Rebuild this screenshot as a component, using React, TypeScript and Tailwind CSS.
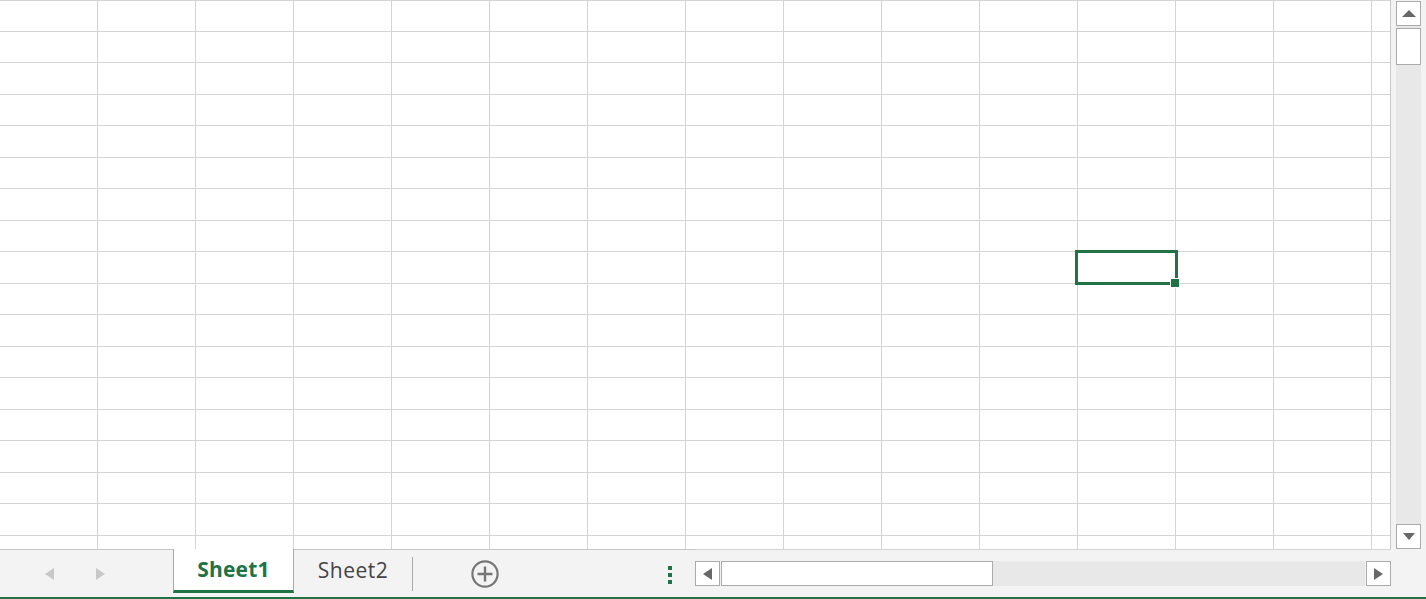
const COLS = 15;
const ROWS = 18;

type Dir = "up" | "down" | "left" | "right";

const arrows: Record<Dir, { vb: string; w: number; h: number; pts: string }> = {
  up: { vb: "0 0 14 7", w: 14, h: 7, pts: "0,7 7,0 14,7" },
  down: { vb: "0 0 12 7", w: 12, h: 7, pts: "0,0 12,0 6,7" },
  left: { vb: "0 0 9 12", w: 9, h: 12, pts: "9,0 9,12 0,6" },
  right: { vb: "0 0 9 12", w: 9, h: 12, pts: "0,0 9,6 0,12" },
};

function Arrow({ dir, color = "#686868" }: { dir: Dir; color?: string }) {
  const a = arrows[dir];
  return (
    <svg viewBox={a.vb} width={a.w} height={a.h} className="block">
      <polygon points={a.pts} fill={color} />
    </svg>
  );
}

function ScrollButton({ dir, className = "" }: { dir: Dir; className?: string }) {
  return (
    <div
      className={`flex shrink-0 items-center justify-center border border-[#ababab] bg-white ${className}`}
    >
      <Arrow dir={dir} />
    </div>
  );
}

function Sheet() {
  return (
    <div className="relative h-[549px] w-[1391px] shrink-0 overflow-hidden border-r border-[#c8c8c8] bg-white">
      <div className="grid grid-cols-[repeat(15,98px)] border-t border-[#d4d4d4]">
        {Array.from({ length: ROWS * COLS }, (_, i) => (
          <div
            key={i}
            className={`border-b border-r border-[#d4d4d4] ${i < COLS ? "h-[30.5px]" : "h-[31.5px]"}`}
          />
        ))}
      </div>

      {/* active cell */}
      <div className="absolute left-[1075px] top-[250px] h-[35px] w-[103px] border-[3px] border-[#217346]" />
      <div className="absolute left-[1170px] top-[278px] h-[10px] w-[10px] border border-white bg-[#217346]" />
    </div>
  );
}

function VerticalScrollbar() {
  return (
    <div className="flex h-[549px] flex-1 flex-col bg-[#f3f3f3] px-[5px] pt-px">
      <ScrollButton dir="up" className="h-[25px]" />
      <div className="flex flex-1 flex-col bg-[#e8e8e8] pt-[2px]">
        <div className="h-[37px] border border-[#ababab] bg-white" />
      </div>
      <ScrollButton dir="down" className="h-[25px]" />
    </div>
  );
}

function TabBar() {
  return (
    <div className="flex h-[48px] bg-[#f3f3f3]">
      {/* sheet navigation */}
      <div className="flex w-[173px] shrink-0 items-start border-t border-[#c6c6c6] pt-[18px]">
        <div className="ml-[45px]">
          <Arrow dir="left" color="#c8c8c8" />
        </div>
        <div className="ml-[42px]">
          <Arrow dir="right" color="#c8c8c8" />
        </div>
      </div>

      {/* active tab */}
      <div className="flex h-[44px] w-[121px] shrink-0 items-center justify-center border-x border-b-[3px] border-x-[#aaaaaa] border-b-[#217346] bg-white pt-px">
        <span className="text-[21px] font-bold tracking-[0.2px] text-[#217346]">Sheet1</span>
      </div>

      <div className="flex w-[401px] shrink-0 items-start border-t border-[#c6c6c6]">
        <div className="flex h-[42px] w-[118px] items-center justify-center">
          <span className="text-[21px] tracking-[0.5px] text-[#444444]">Sheet2</span>
        </div>
        <div className="mt-[7px] h-[34px] w-px bg-[#aaaaaa]" />
        <button className="ml-[58px] mt-[10px]" aria-label="New sheet">
          <svg viewBox="0 0 28 28" width={28} height={28} className="block">
            <circle cx="14" cy="14" r="12.6" fill="none" stroke="#767676" strokeWidth="2.2" />
            <path d="M14 6.5v15M6.5 14h15" stroke="#767676" strokeWidth="2.4" />
          </svg>
        </button>
        <div className="ml-[169px] mt-[16px] flex flex-col gap-[3px]">
          <div className="h-[4px] w-[4px] bg-[#217346]" />
          <div className="h-[4px] w-[4px] bg-[#217346]" />
          <div className="h-[4px] w-[4px] bg-[#217346]" />
        </div>
      </div>

      {/* horizontal scrollbar */}
      <div className="flex w-[696px] shrink-0 items-start border-t border-[#d4d4d4] pt-[11px]">
        <ScrollButton dir="left" className="h-[25px] w-[25px]" />
        <div className="ml-px flex h-[25px] flex-1 bg-[#e8e8e8]">
          <div className="w-[272px] border border-[#ababab] bg-white" />
        </div>
        <ScrollButton dir="right" className="ml-px h-[25px] w-[25px]" />
      </div>

      <div className="flex-1" />
    </div>
  );
}

export default function App() {
  return (
    <div className="flex h-[599px] w-[1426px] flex-col overflow-hidden bg-white font-['Open_Sans','Noto_Sans',sans-serif]">
      <div className="flex">
        <Sheet />
        <VerticalScrollbar />
      </div>
      <TabBar />
      <div className="h-[2px] bg-[#217346]" />
    </div>
  );
}
